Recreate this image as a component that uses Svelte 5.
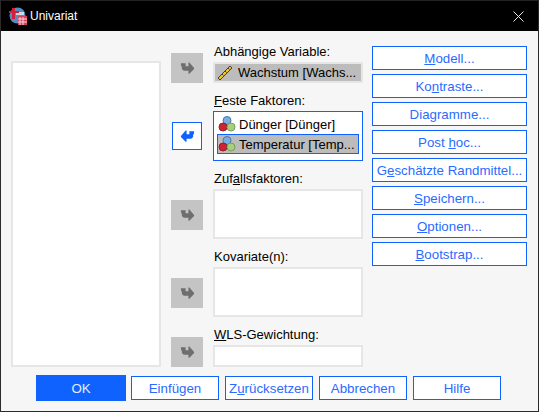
<script>
	const actions = [
		['', 'M', 'odell...'],
		['Ko', 'n', 'traste...'],
		['Diagramme...', '', ''],
		['Post ', 'h', 'oc...'],
		['G', 'e', 'schätzte Randmittel...'],
		['', 'S', 'peichern...'],
		['', 'O', 'ptionen...'],
		['', 'B', 'ootstrap...']
	];
</script>

{#snippet arrow(left)}
	<svg class="arrow-icon" class:flip={left} viewBox="0 0 16 13" width="15" height="13" aria-hidden="true">
		<path d="M1 1h5v3h3V0h1l5 6v1l-5 5H9V9H4L2 7V5L1 3z" />
	</svg>
{/snippet}

{#snippet ruler()}
	<svg class="var-icon" viewBox="0 0 18 18" width="18" height="18" aria-hidden="true">
		<path d="M2 14 14 2l2 2L4 16z" fill="#f2c21e" stroke="#45422c" />
		<path d="M6 10l1.5 1.5M9 7l1.5 1.5M12 4l1.5 1.5" stroke="#45422c" />
	</svg>
{/snippet}

{#snippet balls()}
	<svg class="var-icon" viewBox="0 0 18 18" width="18" height="18" aria-hidden="true">
		<circle cx="9" cy="5.5" r="4" fill="#7aaee2" stroke="#4a76a8" />
		<circle cx="5" cy="12" r="4" fill="#d0222f" stroke="#8f1f2c" />
		<circle cx="13" cy="12" r="4" fill="#a8d07c" stroke="#76a052" />
	</svg>
{/snippet}

<div class="window">
	<header class="titlebar">
		<svg class="app-icon" viewBox="0 0 18 18" width="18" height="18" aria-hidden="true">
			<circle cx="8.5" cy="8.5" r="8" fill="#4f8fc4" />
			<path d="M7 5h8v3H7z" fill="#c9dcec" />
			<path d="M3 1h3v3h4v2H6v6H3V6H0V4h3z" fill="#d2203a" />
			<path d="M9 9h9v9H9z" fill="#d84060" />
			<path d="M11 10v8M14 10v8M9 12h9M9 15h9" stroke="#f6d4dc" />
		</svg>
		<span class="title">Univariat</span>
		<svg class="close" viewBox="0 0 11 11" width="11" height="11" aria-hidden="true">
			<path d="M.5.5l10 10M10.5.5l-10 10" stroke="#e8e8e8" />
		</svg>
	</header>

	<div class="body">
		<div class="main">
			<div class="source"></div>

			<div class="slots">
				<div class="slot">
					<button class="arrow">{@render arrow(false)}</button>
					<div class="field">
						<span class="label">Abhängige Variable:</span>
						<div class="box single">
							<div class="item selected">{@render ruler()}<span class="clip">Wachstum [Wachs...</span></div>
						</div>
					</div>
				</div>

				<div class="slot gap">
					<button class="arrow mid active">{@render arrow(true)}</button>
					<div class="field">
						<span class="label"><u>F</u>este Faktoren:</span>
						<div class="box tall focus">
							<div class="item">{@render balls()}<span class="clip">Dünger [Dünger]</span></div>
							<div class="item selected outlined">{@render balls()}<span class="clip">Temperatur [Temp...</span></div>
						</div>
					</div>
				</div>

				<div class="slot gap">
					<button class="arrow mid">{@render arrow(false)}</button>
					<div class="field">
						<span class="label">Zuf<u>a</u>llsfaktoren:</span>
						<div class="box tall"></div>
					</div>
				</div>

				<div class="slot gap">
					<button class="arrow mid">{@render arrow(false)}</button>
					<div class="field">
						<span class="label">Kovariate(n):</span>
						<div class="box tall"></div>
					</div>
				</div>

				<div class="slot gap">
					<button class="arrow">{@render arrow(false)}</button>
					<div class="field">
						<span class="label"><u>W</u>LS-Gewichtung:</span>
						<div class="box short"></div>
					</div>
				</div>
			</div>

			<div class="actions">
				{#each actions as [before, key, after]}
					<button class="btn">{before}<u>{key}</u>{after}</button>
				{/each}
			</div>
		</div>

		<footer class="footer">
			<button class="btn primary">OK</button>
			<button class="btn">Einfügen</button>
			<button class="btn">Z<u>u</u>rücksetzen</button>
			<button class="btn">Abbrechen</button>
			<button class="btn">Hilfe</button>
		</footer>
	</div>
</div>

<style>
	:global(body) {
		margin: 0;
		background: #f6f6f6;
	}

	.window {
		box-sizing: border-box;
		width: 539px;
		height: 412px;
		display: flex;
		flex-direction: column;
		border: 1px solid #2b2b2b;
		border-top-color: #222;
		background: #f6f6f6;
		font: 13px "Liberation Sans", Arial, sans-serif;
		color: #000;
	}

	.titlebar {
		flex: none;
		height: 30px;
		display: flex;
		align-items: center;
		padding: 0 14px 0 8px;
		background: #000;
		color: #fff;
		font-size: 12px;
	}

	.app-icon {
		margin-right: 3px;
	}

	.title {
		flex: 1;
	}

	.body {
		flex: 1;
		display: flex;
		flex-direction: column;
		padding: 13px 11px 10px 10px;
	}

	.main {
		height: 322px;
		display: flex;
	}

	.source {
		box-sizing: border-box;
		flex: none;
		width: 150px;
		height: 306px;
		margin-top: 17px;
		background: #fff;
		border: 2px solid #e6e6e6;
	}

	.slots {
		flex: none;
		width: 192px;
		margin-left: 10px;
		display: flex;
		flex-direction: column;
	}

	.slot {
		display: flex;
		gap: 10px;
	}

	.slot.gap {
		margin-top: 10px;
	}

	.arrow {
		box-sizing: border-box;
		flex: none;
		width: 32px;
		height: 30px;
		align-self: flex-end;
		display: flex;
		align-items: center;
		justify-content: center;
		padding: 0;
		border: 0;
		background: #c4c4c4;
		font: inherit;
	}

	.arrow.mid {
		margin-bottom: 9px;
	}

	.arrow.active {
		width: 30px;
		height: 28px;
		margin: 0 1px 11px;
		background: #fff;
		border: 1px solid #0f62fe;
	}

	.arrow-icon {
		fill: #6e6e6e;
	}

	.arrow-icon.flip {
		fill: #0f62fe;
		transform: scaleX(-1);
	}

	.field {
		flex: 1;
		min-width: 0;
		display: flex;
		flex-direction: column;
	}

	.label {
		height: 18px;
		line-height: 16px;
		padding-left: 1px;
		white-space: nowrap;
	}

	.box {
		box-sizing: border-box;
		background: #fff;
		border: 2px solid #e6e6e6;
	}

	.box.single {
		height: 21px;
		padding: 0;
		background: #f6f6f6;
	}

	.box.tall {
		height: 50px;
	}

	.box.short {
		height: 22px;
	}

	.box.focus {
		padding: 2px 3px;
		border: 1px solid #0f62fe;
	}

	.item {
		box-sizing: border-box;
		height: 20px;
		display: flex;
		align-items: center;
		gap: 4px;
		padding-left: 1px;
		white-space: nowrap;
	}

	.focus .item {
		gap: 3px;
	}

	.single .item {
		height: 17px;
	}

	.selected {
		background: #bcbcbc;
	}

	.outlined {
		outline: 1px solid #0f62fe;
		outline-offset: -1px;
	}

	.clip {
		overflow: hidden;
	}

	.actions {
		flex: none;
		width: 155px;
		margin-left: 9px;
		padding-top: 2px;
		display: flex;
		flex-direction: column;
		gap: 4px;
		font-size: 13.3px;
	}

	.actions .btn {
		width: 155px;
	}

	.btn {
		box-sizing: border-box;
		height: 24px;
		padding: 0;
		background: #fff;
		border: 1px solid #0f62fe;
		color: #2a6bff;
		font: inherit;
		white-space: nowrap;
	}

	.footer {
		display: flex;
		gap: 6px;
		align-items: center;
		padding-left: 25px;
		padding-top: 9px;
		font-size: 13.3px;
	}

	.footer .btn {
		width: 88px;
	}

	.footer .primary {
		width: 90px;
		height: 26px;
		margin-right: -1px;
		background: #0f62fe;
		border: 0;
		color: #e8eeff;
	}
</style>
